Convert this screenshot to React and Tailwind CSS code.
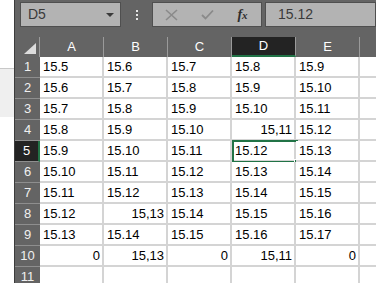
import React from "react";

const cols = ["A", "B", "C", "D", "E"];

// values per row; strings starting with "=" are right aligned numbers
const rows = [
  ["15.5", "15.6", "15.7", "15.8", "15.9"],
  ["15.6", "15.7", "15.8", "15.9", "15.10"],
  ["15.7", "15.8", "15.9", "15.10", "15.11"],
  ["15.8", "15.9", "15.10", "=15,11", "15.12"],
  ["15.9", "15.10", "15.11", "15.12", "15.13"],
  ["15.10", "15.11", "15.12", "15.13", "15.14"],
  ["15.11", "15.12", "15.13", "15.14", "15.15"],
  ["15.12", "=15,13", "15.14", "15.15", "15.16"],
  ["15.13", "15.14", "15.15", "15.16", "15.17"],
  ["=0", "=15,13", "=0", "=15,11", "=0"],
  ["", "", "", "", ""],
];

const Cell = ({ value, selected }) => {
  const right = value.startsWith("=");
  const text = right ? value.slice(1) : value;
  return (
    <div
      className={`relative flex items-center bg-white border-r-2 border-b-2 border-[#d4d4d4] text-[13px] text-black ${
        right ? "justify-end pr-[2px]" : "pl-[3px]"
      }`}
    >
      <span>{text}</span>
      {selected && (
        <>
          <div className="absolute left-0 top-[-1px] w-[66px] h-[23px] border-2 border-[#217346]" />
          <div className="absolute left-[62px] top-[18px] w-[6px] h-[6px] bg-[#217346] border border-white" />
        </>
      )}
    </div>
  );
};

export default function App() {
  return (
    <div className="flex w-[376px] h-[283px] overflow-hidden bg-white font-['Liberation_Sans',Arial,sans-serif]">
      {/* window behind */}
      <div className="w-[14px] flex flex-col bg-white">
        <div className="h-[68px]" />
        <div className="h-px bg-[#c8c8c8]" />
        <div className="h-[48px] bg-[#efefef]" />
      </div>
      <div className="w-px bg-[#3c3c3c]" />

      <div className="flex-1 flex flex-col bg-[#646464] min-w-0">
        {/* formula bar */}
        <div className="h-[37px] shrink-0 flex items-start pt-[2px] pl-[5px]">
          <div className="w-[101px] h-[25px] flex items-center justify-between bg-[#b3b3b3] border border-[#4f4f4f] pl-[7px] pr-[6px]">
            <span className="text-[14px] text-[#3a3a3a]">D5</span>
            <div className="w-0 h-0 border-l-[4px] border-r-[4px] border-t-[4px] border-l-transparent border-r-transparent border-t-[#3a3a3a]" />
          </div>
          <div className="w-[31px] h-[25px] flex flex-col items-center justify-center gap-[2px]">
            <div className="w-[2px] h-[2px] bg-[#e6e6e6]" />
            <div className="w-[2px] h-[2px] bg-[#e6e6e6]" />
            <div className="w-[2px] h-[2px] bg-[#e6e6e6]" />
          </div>
          <div className="w-[110px] h-[25px] flex items-center bg-[#b3b3b3] border border-[#4f4f4f]">
            <div className="w-[37px] flex justify-center">
              <svg width="13" height="12" viewBox="0 0 13 12">
                <path d="M1 1 L12 11 M12 1 L1 11" stroke="#8a8a8a" strokeWidth="1.6" />
              </svg>
            </div>
            <div className="w-[34px] flex justify-center">
              <svg width="13" height="11" viewBox="0 0 13 11">
                <path d="M1 6 L4.5 9.5 L12 1.5" stroke="#8a8a8a" strokeWidth="1.8" fill="none" />
              </svg>
            </div>
            <div className="w-[37px] flex justify-center">
              <span className="font-['Liberation_Serif',serif] italic font-bold text-[14px] text-[#2e2e2e]">
                f<span className="text-[11px]">x</span>
              </span>
            </div>
          </div>
          <div className="ml-[3px] flex-1 h-[25px] flex items-center bg-[#b3b3b3] border border-[#4f4f4f] pl-[12px]">
            <span className="text-[14px] text-[#3a3a3a]">15.12</span>
          </div>
        </div>

        {/* grid */}
        <div className="grid grid-cols-[25px_repeat(5,64px)_16px] grid-rows-[20px_repeat(11,21px)]">
          <div className="relative border-r border-[#9a9a9a]">
            <svg className="absolute right-[3px] bottom-[3px]" width="12" height="11" viewBox="0 0 12 11">
              <path d="M12 0 L12 11 L0 11 Z" fill="#dcdcdc" />
            </svg>
          </div>
          {cols.map((c) => (
            <div
              key={c}
              className={`flex items-center justify-center text-[13px] border-r border-[#9a9a9a] ${
                c === "D"
                  ? "bg-[#232323] text-white border-b-2 border-b-[#217346]"
                  : "text-white"
              }`}
            >
              {c}
            </div>
          ))}
          <div />

          {rows.map((r, i) => (
            <React.Fragment key={i}>
              <div
                className={`flex items-center justify-center text-[13px] border-b border-[#8e8e8e] ${
                  i === 4
                    ? "bg-[#232323] text-white border-r-2 border-r-[#217346]"
                    : "text-[#f0f0f0]"
                }`}
              >
                {i + 1}
              </div>
              {r.map((v, j) => (
                <Cell key={j} value={v} selected={i === 4 && j === 3} />
              ))}
              <div className="bg-white border-b-2 border-[#d4d4d4]" />
            </React.Fragment>
          ))}
        </div>
      </div>
    </div>
  );
}
